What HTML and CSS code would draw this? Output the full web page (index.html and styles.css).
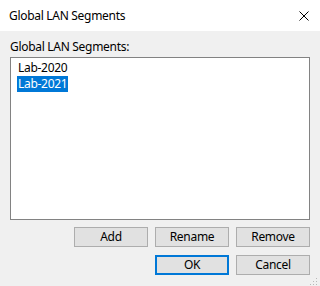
FILE: index.html
```html
<!DOCTYPE html>
<html>
<head>
<meta charset="utf-8">
<link rel="stylesheet" href="styles.css">
</head>
<body>
<div class="dialog">
  <div class="titlebar">
    <span class="title">Global LAN Segments</span>
    <svg class="close" width="10" height="10" viewBox="0 0 10 10"><path d="M0.5 0.5 L9.5 9.5 M9.5 0.5 L0.5 9.5" stroke="#000" stroke-width="1" fill="none"/></svg>
  </div>
  <div class="content">
    <div class="label">Global LAN Segments:</div>
    <div class="listbox">
      <div class="item">Lab-2020</div>
      <div class="item selected">Lab-2021</div>
    </div>
    <div class="row row-top">
      <button class="btn">Add</button>
      <button class="btn">Rename</button>
      <button class="btn">Remove</button>
    </div>
    <div class="row row-bottom">
      <button class="btn default">OK</button>
      <button class="btn">Cancel</button>
    </div>
  </div>
  <svg class="grip" width="10" height="10" viewBox="0 0 10 10">
    <rect x="8" y="2" width="1" height="1" fill="#b8b8b8"/>
    <rect x="5" y="5" width="1" height="1" fill="#b8b8b8"/>
    <rect x="8" y="5" width="1" height="1" fill="#b8b8b8"/>
    <rect x="2" y="8" width="1" height="1" fill="#b8b8b8"/>
    <rect x="5" y="8" width="1" height="1" fill="#b8b8b8"/>
    <rect x="8" y="8" width="1" height="1" fill="#b8b8b8"/>
  </svg>
</div>
</body>
</html>
```
FILE: styles.css
```css
html, body {
  margin: 0;
  padding: 0;
}
body {
  width: 320px;
  height: 286px;
  overflow: hidden;
  background: #f0f0f0;
  font-family: "Noto Sans", "Open Sans", sans-serif;
  font-size: 12px;
  letter-spacing: -0.3px;
  color: #000;
}
.dialog {
  position: relative;
  width: 320px;
  height: 286px;
}
.titlebar {
  height: 31px;
  background: #ffffff;
  display: flex;
  align-items: center;
  justify-content: space-between;
  padding: 0 11px 0 9px;
  box-sizing: border-box;
}
.title {
  line-height: 16px;
}
.close {
  display: block;
}
.content {
  padding: 8px 10px 0 10px;
}
.label {
  line-height: 16px;
  height: 16px;
}
.listbox {
  margin-top: 2px;
  height: 163px;
  background: #ffffff;
  border: 1px solid #828282;
  box-sizing: border-box;
  padding: 2px 0 0 6px;
}
.item {
  display: table;
  line-height: 16px;
  padding: 0 1px;
}
.item.selected {
  background: #0078d7;
  color: #ffffff;
}
.row {
  display: flex;
  justify-content: flex-end;
  gap: 7px;
}
.row-top {
  margin-top: 7px;
}
.row-bottom {
  margin-top: 8px;
}
.btn {
  width: 74px;
  height: 20px;
  margin: 0;
  padding: 0;
  background: #e1e1e1;
  border: 1px solid #adadad;
  font-family: "Noto Sans", "Open Sans", sans-serif;
  font-size: 12px;
  letter-spacing: -0.3px;
  color: #000;
  line-height: 16px;
  box-sizing: border-box;
}
.btn.default {
  border: 2px solid #0078d7;
}
.grip {
  position: absolute;
  right: 2px;
  bottom: 0px;
}
```
